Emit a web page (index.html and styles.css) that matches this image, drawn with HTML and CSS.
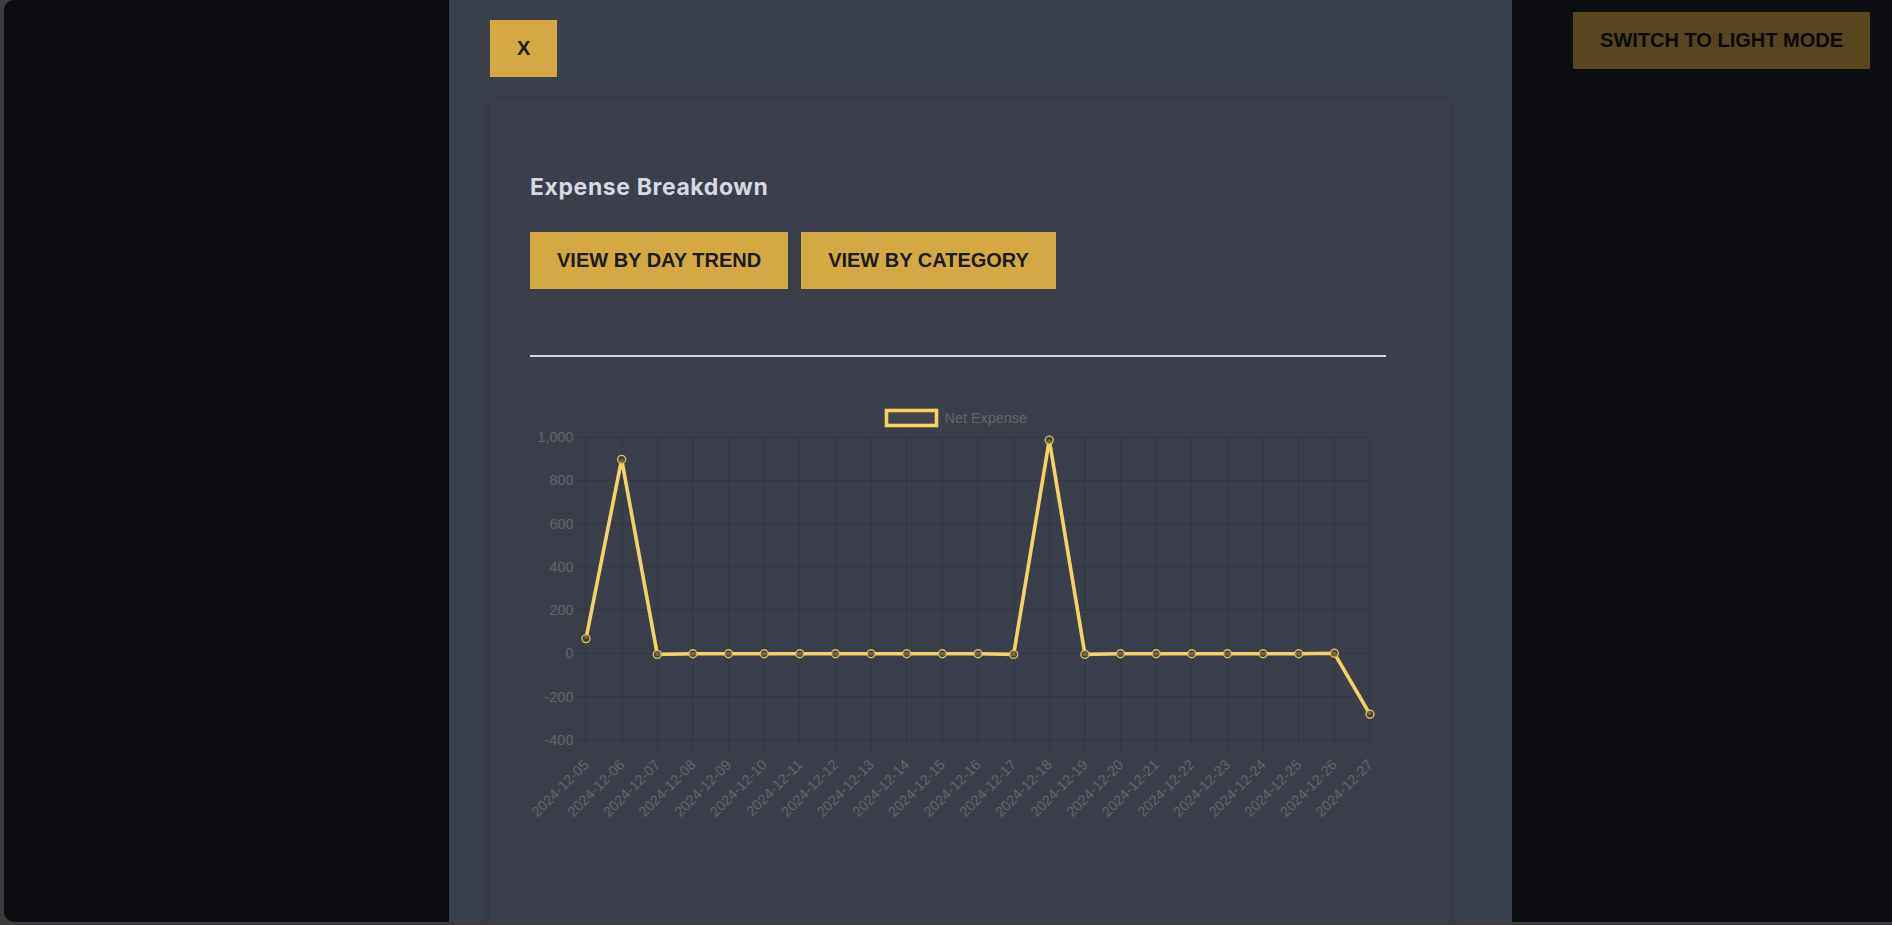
FILE: index.html
```html
<!DOCTYPE html>
<html lang="en">
<head>
<meta charset="utf-8">
<title>Expense Breakdown</title>
<link rel="stylesheet" href="styles.css">
</head>
<body>
<div class="screen">
  <button class="theme-toggle">SWITCH TO LIGHT MODE</button>

  <div class="overlay">
    <div class="modal">
      <button class="btn close-btn">X</button>
      <section class="card">
        <h2 class="card-title">Expense Breakdown</h2>
        <div class="btn-row">
          <button class="btn">VIEW BY DAY TREND</button>
          <button class="btn">VIEW BY CATEGORY</button>
        </div>
        <hr class="divider">
        <svg class="chart" width="856" height="470" viewBox="0 0 856 470" xmlns="http://www.w3.org/2000/svg">
          <g class="grid">
            <line x1="46.4" y1="57.1" x2="840" y2="57.1"/>
            <line x1="46.4" y1="100.3" x2="840" y2="100.3"/>
            <line x1="46.4" y1="143.6" x2="840" y2="143.6"/>
            <line x1="46.4" y1="186.8" x2="840" y2="186.8"/>
            <line x1="46.4" y1="230.1" x2="840" y2="230.1"/>
            <line x1="46.4" y1="273.3" x2="840" y2="273.3"/>
            <line x1="46.4" y1="316.5" x2="840" y2="316.5"/>
            <line x1="46.4" y1="359.8" x2="840" y2="359.8"/>
            <line x1="56" y1="57.1" x2="56" y2="369.4"/>
            <line x1="91.64" y1="57.1" x2="91.64" y2="369.4"/>
            <line x1="127.27" y1="57.1" x2="127.27" y2="369.4"/>
            <line x1="162.91" y1="57.1" x2="162.91" y2="369.4"/>
            <line x1="198.55" y1="57.1" x2="198.55" y2="369.4"/>
            <line x1="234.18" y1="57.1" x2="234.18" y2="369.4"/>
            <line x1="269.82" y1="57.1" x2="269.82" y2="369.4"/>
            <line x1="305.45" y1="57.1" x2="305.45" y2="369.4"/>
            <line x1="341.09" y1="57.1" x2="341.09" y2="369.4"/>
            <line x1="376.73" y1="57.1" x2="376.73" y2="369.4"/>
            <line x1="412.36" y1="57.1" x2="412.36" y2="369.4"/>
            <line x1="448" y1="57.1" x2="448" y2="369.4"/>
            <line x1="483.64" y1="57.1" x2="483.64" y2="369.4"/>
            <line x1="519.27" y1="57.1" x2="519.27" y2="369.4"/>
            <line x1="554.91" y1="57.1" x2="554.91" y2="369.4"/>
            <line x1="590.55" y1="57.1" x2="590.55" y2="369.4"/>
            <line x1="626.18" y1="57.1" x2="626.18" y2="369.4"/>
            <line x1="661.82" y1="57.1" x2="661.82" y2="369.4"/>
            <line x1="697.45" y1="57.1" x2="697.45" y2="369.4"/>
            <line x1="733.09" y1="57.1" x2="733.09" y2="369.4"/>
            <line x1="768.73" y1="57.1" x2="768.73" y2="369.4"/>
            <line x1="804.36" y1="57.1" x2="804.36" y2="369.4"/>
            <line x1="840" y1="57.1" x2="840" y2="369.4"/>
          </g>

          <g class="y-labels">
            <text x="43.4" y="57.1" dy="0.36em">1,000</text>
            <text x="43.4" y="100.3" dy="0.36em">800</text>
            <text x="43.4" y="143.6" dy="0.36em">600</text>
            <text x="43.4" y="186.8" dy="0.36em">400</text>
            <text x="43.4" y="230.1" dy="0.36em">200</text>
            <text x="43.4" y="273.3" dy="0.36em">0</text>
            <text x="43.4" y="316.5" dy="0.36em">-200</text>
            <text x="43.4" y="359.8" dy="0.36em">-400</text>
          </g>

          <g class="legend">
            <rect class="legend-box" x="356.5" y="30.5" width="50" height="15"/>
            <text class="legend-text" x="414.6" y="38" dy="0.36em">Net Expense</text>
          </g>

          <polyline class="series" points="56,258.6 91.64,79.4 127.27,274.4 162.91,273.7 198.55,273.7 234.18,273.7 269.82,273.7 305.45,273.7 341.09,273.7 376.73,273.7 412.36,273.7 448,273.7 483.64,274.4 519.27,60.1 554.91,274.4 590.55,273.7 626.18,273.7 661.82,273.7 697.45,273.7 733.09,273.7 768.73,273.7 804.36,273.3 840,334.3"/>

          <g class="points">
            <circle cx="56" cy="258.6" r="4"/>
            <circle cx="91.64" cy="79.4" r="4"/>
            <circle cx="127.27" cy="274.4" r="4"/>
            <circle cx="162.91" cy="273.7" r="4"/>
            <circle cx="198.55" cy="273.7" r="4"/>
            <circle cx="234.18" cy="273.7" r="4"/>
            <circle cx="269.82" cy="273.7" r="4"/>
            <circle cx="305.45" cy="273.7" r="4"/>
            <circle cx="341.09" cy="273.7" r="4"/>
            <circle cx="376.73" cy="273.7" r="4"/>
            <circle cx="412.36" cy="273.7" r="4"/>
            <circle cx="448" cy="273.7" r="4"/>
            <circle cx="483.64" cy="274.4" r="4"/>
            <circle cx="519.27" cy="60.1" r="4"/>
            <circle cx="554.91" cy="274.4" r="4"/>
            <circle cx="590.55" cy="273.7" r="4"/>
            <circle cx="626.18" cy="273.7" r="4"/>
            <circle cx="661.82" cy="273.7" r="4"/>
            <circle cx="697.45" cy="273.7" r="4"/>
            <circle cx="733.09" cy="273.7" r="4"/>
            <circle cx="768.73" cy="273.7" r="4"/>
            <circle cx="804.36" cy="273.3" r="4"/>
            <circle cx="840" cy="334.3" r="4"/>
          </g>

          <g class="x-labels">
            <text transform="translate(56 382) rotate(-45)" dy="0.36em">2024-12-05</text>
            <text transform="translate(91.64 382) rotate(-45)" dy="0.36em">2024-12-06</text>
            <text transform="translate(127.27 382) rotate(-45)" dy="0.36em">2024-12-07</text>
            <text transform="translate(162.91 382) rotate(-45)" dy="0.36em">2024-12-08</text>
            <text transform="translate(198.55 382) rotate(-45)" dy="0.36em">2024-12-09</text>
            <text transform="translate(234.18 382) rotate(-45)" dy="0.36em">2024-12-10</text>
            <text transform="translate(269.82 382) rotate(-45)" dy="0.36em">2024-12-11</text>
            <text transform="translate(305.45 382) rotate(-45)" dy="0.36em">2024-12-12</text>
            <text transform="translate(341.09 382) rotate(-45)" dy="0.36em">2024-12-13</text>
            <text transform="translate(376.73 382) rotate(-45)" dy="0.36em">2024-12-14</text>
            <text transform="translate(412.36 382) rotate(-45)" dy="0.36em">2024-12-15</text>
            <text transform="translate(448 382) rotate(-45)" dy="0.36em">2024-12-16</text>
            <text transform="translate(483.64 382) rotate(-45)" dy="0.36em">2024-12-17</text>
            <text transform="translate(519.27 382) rotate(-45)" dy="0.36em">2024-12-18</text>
            <text transform="translate(554.91 382) rotate(-45)" dy="0.36em">2024-12-19</text>
            <text transform="translate(590.55 382) rotate(-45)" dy="0.36em">2024-12-20</text>
            <text transform="translate(626.18 382) rotate(-45)" dy="0.36em">2024-12-21</text>
            <text transform="translate(661.82 382) rotate(-45)" dy="0.36em">2024-12-22</text>
            <text transform="translate(697.45 382) rotate(-45)" dy="0.36em">2024-12-23</text>
            <text transform="translate(733.09 382) rotate(-45)" dy="0.36em">2024-12-24</text>
            <text transform="translate(768.73 382) rotate(-45)" dy="0.36em">2024-12-25</text>
            <text transform="translate(804.36 382) rotate(-45)" dy="0.36em">2024-12-26</text>
            <text transform="translate(840 382) rotate(-45)" dy="0.36em">2024-12-27</text>
          </g>
        </svg>
      </section>
    </div>
  </div>
</div>
</body>
</html>
```

FILE: styles.css
```css
* {
  box-sizing: border-box;
}

html, body {
  margin: 0;
  padding: 0;
  height: 925px;
  overflow: hidden;
}

body {
  background: #3c3c3c;
  font-family: "Liberation Sans", Arial, sans-serif;
}

.screen {
  position: relative;
  margin-left: 4px;
  height: 922px;
  background: #1f2128;
  border-radius: 10px 0 0 10px;
  overflow: hidden;
}

.theme-toggle {
  position: absolute;
  top: 12px;
  right: 22px;
  margin: 0;
  border: none;
  background: #d6ac4a;
  color: #1a1a1a;
  font-family: "Liberation Sans", Arial, sans-serif;
  font-weight: 700;
  font-size: 20px;
  line-height: 23px;
  padding: 17px 27px;
}

.overlay {
  position: absolute;
  inset: 0;
  background: rgba(0, 0, 0, 0.6);
  display: flex;
  padding-left: 445px;
}

.modal {
  width: 1063px;
  height: 100%;
  background: #3b404d;
  padding: 20px 0 0 41px;
  overflow: hidden;
}

.btn {
  display: block;
  margin: 0;
  border: none;
  background: #d4a843;
  color: #1b1b1b;
  font-family: "Liberation Sans", Arial, sans-serif;
  font-weight: 700;
  font-size: 20px;
  line-height: 23px;
  padding: 17px 27px;
  cursor: pointer;
}

.card {
  width: 960px;
  margin-top: 23px;
  min-height: 900px;
  background: #3a3f4b;
  box-shadow: 0 0 14px rgba(0, 0, 0, 0.18);
  padding: 74px 40px 0 40px;
}

.card-title {
  margin: 0 0 32px 0;
  font-family: Inter, "Open Sans", sans-serif;
  font-weight: 700;
  font-size: 23px;
  line-height: 26px;
  letter-spacing: 0.6px;
  color: #d6d8e2;
}

.btn-row {
  display: flex;
  gap: 13px;
}

.divider {
  width: 856px;
  margin: 66px 0 23px 0;
  border: none;
  height: 2px;
  background: #d3d6de;
}

.chart {
  display: block;
  overflow: visible;
  font-family: "Liberation Sans", Arial, sans-serif;
  font-size: 14.4px;
}

.grid line {
  stroke: rgba(0, 0, 0, 0.1);
  stroke-width: 1.2;
}

.y-labels text {
  fill: #666;
  text-anchor: end;
}

.x-labels text {
  fill: #666;
  text-anchor: end;
}

.legend-box {
  fill: rgba(245, 210, 100, 0.04);
  stroke: #f5d264;
  stroke-width: 3.6;
}

.legend-text {
  fill: #666;
}

.series {
  fill: none;
  stroke: #f5d264;
  stroke-width: 3.6;
  stroke-linejoin: miter;
}

.points circle {
  fill: rgba(70, 66, 55, 0.75);
  stroke: #d9bd5e;
  stroke-width: 1.4;
}
```
